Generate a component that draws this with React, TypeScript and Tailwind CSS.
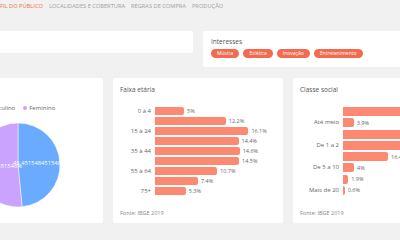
const navItems = [
  { label: "PERFIL DO PÚBLICO", active: true },
  { label: "LOCALIDADES E COBERTURA", active: false },
  { label: "REGRAS DE COMPRA", active: false },
  { label: "PRODUÇÃO", active: false },
];

const interesses = ["Música", "Eclética", "Inovação", "Entretenimento"];

const faixaEtaria = [
  { label: "0 à 4", value: 5, text: "5%" },
  { label: "5 à 14", value: 12.2, text: "12.2%" },
  { label: "15 à 24", value: 16.1, text: "16.1%" },
  { label: "25 à 34", value: 14.4, text: "14.4%" },
  { label: "35 à 44", value: 14.6, text: "14.6%" },
  { label: "45 à 54", value: 14.5, text: "14.5%" },
  { label: "55 à 64", value: 10.7, text: "10.7%" },
  { label: "65 à 74", value: 7.4, text: "7.4%" },
  { label: "75+", value: 5.3, text: "5.3%" },
];

const classeSocial = [
  { label: "Sem rendimento", value: 25.4, text: "25.4%" },
  { label: "Até meio", value: 3.9, text: "3.9%" },
  { label: "Meio a 1", value: 23.1, text: "23.1%" },
  { label: "De 1 a 2", value: 24.2, text: "24.2%" },
  { label: "De 2 a 5", value: 16.4, text: "16.4%" },
  { label: "De 5 a 10", value: 4, text: "4%" },
  { label: "De 10 a 20", value: 1.9, text: "1.9%" },
  { label: "Mais de 20", value: 0.6, text: "0.6%" },
];

type Row = { label: string; value: number; text: string };

function BarChart({
  data,
  scale,
  labelWidth,
  showEven,
  barHeight,
}: {
  data: Row[];
  scale: number;
  labelWidth: string;
  showEven: boolean;
  barHeight: string;
}) {
  return (
    <div className="flex flex-col h-[90px] mt-[12px]">
      {data.map((row, i) => {
        const showLabel = showEven ? i % 2 === 0 : i % 2 === 1;
        return (
          <div key={row.label} className="flex-1 flex items-center">
            <div className={`${labelWidth} shrink-0 pr-[4px] text-right text-[6px] text-[#666] whitespace-nowrap`}>
              {showLabel ? row.label : ""}
            </div>
            <div
              className={`${barHeight} bg-[#fc8a72] rounded-r-[2px] shrink-0`}
              style={{ width: row.value * scale }}
            />
            <span className="ml-[3px] text-[5.5px] text-[#666] whitespace-nowrap">{row.text}</span>
          </div>
        );
      })}
    </div>
  );
}

function Card({ title, children }: { title: string; children: React.ReactNode }) {
  return (
    <div className="bg-white rounded-[2px] h-[145px] px-[7px] pt-[8px] flex flex-col overflow-hidden">
      <div className="text-[6.5px] leading-[8px] text-[#555]">{title}</div>
      {children}
    </div>
  );
}

export default function App() {
  return (
    <div className="w-[400px] h-[240px] overflow-hidden bg-[#f1f1f1]" style={{ fontFamily: '"Open Sans", sans-serif' }}>
      <div className="-ml-[67px] w-[530px]">
        {/* abas */}
        <div className="flex items-center h-[12px] pl-[57px] gap-[6px]">
          {navItems.map((item) => (
            <span
              key={item.label}
              className={`text-[5.7px] whitespace-nowrap ${item.active ? "text-[#f26b50]" : "text-[#a0a0a0]"}`}
            >
              {item.label}
            </span>
          ))}
        </div>

        {/* topo */}
        <div className="grid grid-cols-2 gap-[10px] items-start mt-[19px]">
          <div className="bg-white rounded-[2px] h-[22px]" />
          <div className="bg-white rounded-[2px] h-[36px] px-[8px] pt-[7px]">
            <div className="text-[6.5px] leading-[8px] text-[#555]">Interesses</div>
            <div className="flex gap-[4px] mt-[3px]">
              {interesses.map((tag) => (
                <span
                  key={tag}
                  className="h-[9px] px-[6px] rounded-full bg-[#f26b50] text-white text-[5px] leading-[9px]"
                >
                  {tag}
                </span>
              ))}
            </div>
          </div>
        </div>

        {/* gráficos */}
        <div className="grid grid-cols-3 gap-[10px] mt-[11px]">
          <Card title="Gênero">
            <div className="flex justify-center items-center gap-[8px] mt-[10px] text-[6px] leading-[8px] text-[#666]">
              <span className="flex items-center gap-[2px]">
                <span className="w-[4px] h-[4px] rounded-full bg-[#6aabff]" />
                Masculino
              </span>
              <span className="flex items-center gap-[2px]">
                <span className="w-[4px] h-[4px] rounded-full bg-[#c9a3ff]" />
                Feminino
              </span>
            </div>
            <svg width="170" height="100" viewBox="0 0 170 100" className="-mx-[7px] mt-[3px] shrink-0">
              <path d="M85,50 L85,8 A42,42 0 0 1 89.08,91.8 Z" fill="#6aabff" stroke="#fff" strokeWidth="0.5" />
              <path d="M85,50 L89.08,91.8 A42,42 0 1 1 85,8 Z" fill="#c9a3ff" stroke="#fff" strokeWidth="0.5" />
              <text x="80" y="50" fill="#fff" fontSize="5.8">48.451548451548454%</text>
              <text x="89" y="53" fill="#fff" fontSize="5.8" textAnchor="end">51.548451548451546%</text>
            </svg>
          </Card>

          <Card title="Faixa etária">
            <BarChart data={faixaEtaria} scale={5.8} labelWidth="w-[35px]" showEven barHeight="h-[8px]" />
            <div className="mt-[13px] text-[5.5px] text-[#888]">Fonte: IBGE 2019</div>
          </Card>

          <Card title="Classe social">
            <BarChart data={classeSocial} scale={2.75} labelWidth="w-[43px]" showEven={false} barHeight="h-[9px]" />
            <div className="mt-[13px] text-[5.5px] text-[#888]">Fonte: IBGE 2019</div>
          </Card>
        </div>
      </div>
    </div>
  );
}
